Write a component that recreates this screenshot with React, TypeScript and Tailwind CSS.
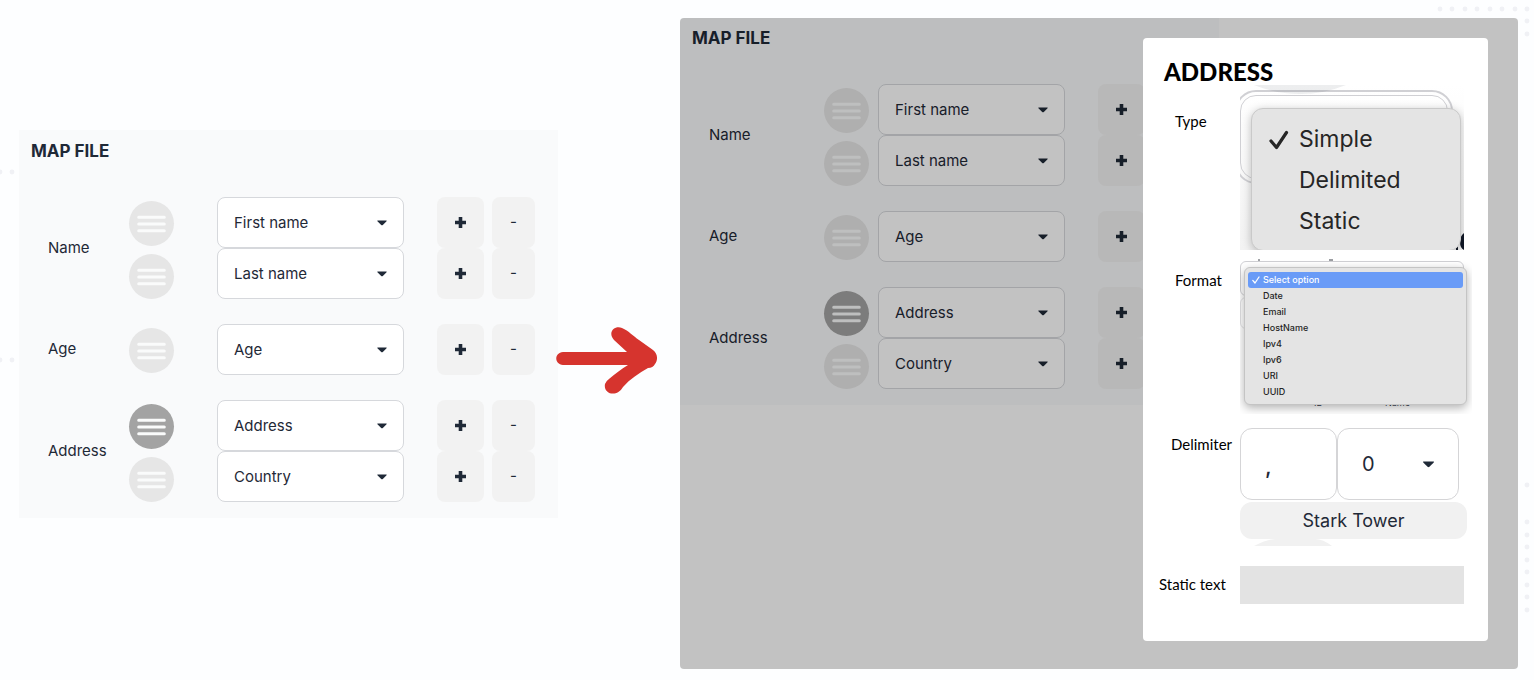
import { useState } from 'react';
import type { ReactNode } from 'react';

type Field = { name: string; active?: boolean };
type Group = { label: string; fields: Field[] };

const GROUPS: Group[] = [
  { label: 'Name', fields: [{ name: 'First name' }, { name: 'Last name' }] },
  { label: 'Age', fields: [{ name: 'Age' }] },
  { label: 'Address', fields: [{ name: 'Address', active: true }, { name: 'Country' }] },
];

const FIELD_NAMES = ['First name', 'Last name', 'Age', 'Address', 'Country'];
const TYPES = ['Simple', 'Delimited', 'Static'];
const FORMATS = ['Select option', 'Date', 'Email', 'HostName', 'Ipv4', 'Ipv6', 'URI', 'UUID'];

function Caret({ className }: { className: string }) {
  return (
    <svg viewBox="0 0 10 6" className={className} aria-hidden="true">
      <path d="M0.4 0.4H9.6Q9.8 1 9.3 1.5L5.8 4.9Q5 5.6 4.2 4.9L0.7 1.5Q0.2 1 0.4 0.4Z" fill="#1f2937" />
    </svg>
  );
}

function Check({ className }: { className: string }) {
  return (
    <svg viewBox="0 0 20 20" className={className} fill="none" aria-hidden="true">
      <path d="M2 11L7.5 17.5L17.5 2.5" stroke="currentColor" strokeWidth="3.2" strokeLinecap="round" strokeLinejoin="round" />
    </svg>
  );
}

function MenuButton({ field }: { field: Field }) {
  return (
    <button
      type="button"
      aria-label={`Options for ${field.name}`}
      className={`flex size-[45px] items-center justify-center rounded-full ${field.active ? 'bg-[#a3a3a3]' : 'bg-[#e6e6e6]'}`}
    >
      <svg viewBox="0 0 29 18" className="h-[18px] w-[29px]" aria-hidden="true">
        <path d="M1.7 2.2H27.3M1.7 9H27.3M1.7 15.8H27.3" stroke="#fafbfb" strokeWidth="3" strokeLinecap="round" />
      </svg>
    </button>
  );
}

function MapFile({ compact = false }: { compact?: boolean }) {
  return (
    <section className="w-[539px] shrink-0 bg-[#f9fafb] pr-[23px] pb-4 pl-[29px] text-[#1f2937]">
      <h2 className={`-ml-[17px] text-[17px] leading-6 font-bold ${compact ? 'h-[66px] pt-2' : 'h-[67px] pt-[9px]'}`}>MAP FILE</h2>
      <div className="flex flex-col gap-[25px]">
        {GROUPS.map((group) => (
          <div key={group.label} className="flex text-[15px]">
            <div className="flex flex-1 items-center">{group.label}</div>
            <div className={`flex flex-col gap-2 pt-1 ${compact ? 'mr-[9px]' : 'mr-[43px]'}`}>
              {group.fields.map((field) => (
                <MenuButton key={field.name} field={field} />
              ))}
            </div>
            <div className="flex flex-col">
              {group.fields.map((field) => (
                <div key={field.name} className="flex h-[51px]">
                  <div className="grid items-center">
                    <select
                      aria-label={`${group.label} column`}
                      defaultValue={field.name}
                      className="col-start-1 row-start-1 h-full w-[187px] appearance-none rounded-lg border border-[#d6d8dc] bg-white px-4 pt-px"
                    >
                      {FIELD_NAMES.map((name) => (
                        <option key={name}>{name}</option>
                      ))}
                    </select>
                    <Caret className="pointer-events-none col-start-1 row-start-1 mr-[17px] h-[6px] w-[10px] justify-self-end" />
                  </div>
                  <button
                    type="button"
                    aria-label={`Add after ${field.name}`}
                    className="ml-[33px] flex w-[47px] items-center justify-center rounded-lg bg-[#f2f2f2]"
                  >
                    <svg viewBox="0 0 11 11" className="size-[11px]" aria-hidden="true">
                      <path d="M5.5 0V11M0 5.5H11" stroke="#1f2937" strokeWidth="3.6" />
                    </svg>
                  </button>
                  <button type="button" aria-label={`Remove ${field.name}`} className="ml-2 w-[43px] rounded-lg bg-[#f2f2f2]">
                    -
                  </button>
                </div>
              ))}
            </div>
          </div>
        ))}
      </div>
    </section>
  );
}

function Row({ label, htmlFor, className, children }: { label: string; htmlFor: string; className: string; children: ReactNode }) {
  return (
    <div className="flex items-start">
      <label htmlFor={htmlFor} className={`w-[97px] shrink-0 text-[15px] leading-5 text-black ${className}`}>
        {label}
      </label>
      {children}
    </div>
  );
}

function TypeField() {
  const [value, setValue] = useState('Simple');
  return (
    <div className="relative h-[165px] w-[224px] overflow-hidden bg-linear-to-b from-white to-[#f3f3f3] font-[Inter,sans-serif]">
      <button
        id="type"
        type="button"
        aria-haspopup="listbox"
        aria-label="Type"
        className="absolute top-[10px] left-0 h-[84px] w-[208px] rounded-2xl border border-[#d0d0d4] bg-linear-to-b from-white to-[#f8f8f8] outline-2 outline-offset-3 outline-[#d0d0d4]"
      />
      <svg viewBox="0 0 224 165" className="pointer-events-none absolute inset-0 size-full" aria-hidden="true">
        <path d="M14 0H106Q84 9 60 9Q36 9 14 0Z" fill="#1f2937" fillOpacity="0.08" />
        <path d="M216 165V159H218V165ZM224 148Q220 151 220 157Q220 163 224 165Z" fill="#111827" />
      </svg>
      <div
        role="listbox"
        aria-label="Type"
        className="absolute top-[23px] left-[11px] flex w-[210px] flex-col rounded-xl border border-[#c9c9c9] bg-[#e4e4e4] pt-[10px] pb-2 shadow-[0_2px_10px_rgba(0,0,0,0.25)]"
      >
        {TYPES.map((type) => (
          <button
            key={type}
            type="button"
            role="option"
            aria-selected={type === value}
            onClick={() => setValue(type)}
            className="flex h-[41px] items-center gap-2 pl-[17px] text-[23px] text-[#262626]"
          >
            <span className="w-[22px]">{type === value && <Check className="size-5" />}</span>
            {type}
          </button>
        ))}
      </div>
    </div>
  );
}

function FormatField() {
  const [value, setValue] = useState('Select option');
  return (
    <div className="relative h-[156px] w-[232px] overflow-hidden font-[Inter,sans-serif]">
      <div className="absolute top-[3px] left-0 h-[35px] w-[224px] rounded-md border border-[#d0d0d4]" />
      <div className="absolute top-[39px] left-0 h-[32px] w-[224px] rounded-md border border-[#e2e2e4]" />
      <svg viewBox="0 0 232 4" className="absolute top-0 left-0 h-1 w-[232px]" aria-hidden="true">
        <path d="M19 1V3M89 2H93" stroke="#7c7f84" strokeWidth="1.4" />
      </svg>
      <div className="absolute bottom-[5px] left-[74px] flex gap-[62px] text-[9px] leading-3 text-[#374151]">
        <span>ID</span>
        <span>Name</span>
      </div>
      <div
        id="format"
        role="listbox"
        aria-label="Format"
        className="absolute top-[9px] left-1 flex w-[223px] flex-col rounded-md border border-[#c4c4c4] bg-[#e4e4e4] px-[3px] py-1 shadow-[0_3px_10px_rgba(0,0,0,0.3)]"
      >
        {FORMATS.map((format) => (
          <button
            key={format}
            type="button"
            role="option"
            aria-selected={format === value}
            onClick={() => setValue(format)}
            className={`flex h-4 items-center rounded-[3px] pl-1 text-[9px] font-medium ${format === value ? 'bg-[#699bf7] text-white' : 'text-[#262626]'}`}
          >
            <span className="w-[11px]">{format === value && <Check className="size-2" />}</span>
            {format}
          </button>
        ))}
      </div>
    </div>
  );
}

function DelimiterField() {
  return (
    <div className="w-[227px] font-[Inter,sans-serif] text-[#1f2937]">
      <div className="flex h-[72px]">
        <input
          id="delimiter"
          defaultValue=","
          className="w-[97px] rounded-xl border border-[#d5d5d7] bg-white px-6 pt-1 text-[22px] font-medium"
        />
        <div className="grid items-center">
          <select
            aria-label="Part"
            defaultValue="0"
            className="col-start-1 row-start-1 h-full w-[122px] appearance-none rounded-xl border border-[#d5d5d7] bg-white px-6 text-xl"
          >
            <option>0</option>
            <option>1</option>
          </select>
          <Caret className="pointer-events-none col-start-1 row-start-1 mr-6 h-[7px] w-[13px] justify-self-end" />
        </div>
      </div>
      <button type="button" className="mt-[2px] h-[37px] w-full rounded-xl bg-[#f1f1f1] pt-px text-lg">
        Stark Tower
      </button>
      <svg viewBox="0 0 227 7" className="block h-[7px] w-[227px]" aria-hidden="true">
        <path d="M14 7Q28 0 36 0H75Q83 0 92 7Z" fill="#f1f1f1" />
      </svg>
    </div>
  );
}

function AddressDialog() {
  return (
    <div
      role="dialog"
      aria-labelledby="dialog-title"
      className="col-start-1 row-start-1 mt-5 mr-[30px] mb-7 w-[345px] justify-self-end rounded bg-white pb-[37px] font-[Lato,sans-serif]"
    >
      <h2 id="dialog-title" className="h-[47px] pt-5 pl-[21px] text-2xl leading-7 font-black text-black">
        ADDRESS
      </h2>
      <Row label="Type" htmlFor="type" className="pt-[26px] pl-8">
        <TypeField />
      </Row>
      <div className="mt-2">
        <Row label="Format" htmlFor="format" className="pt-3 pl-8">
          <FormatField />
        </Row>
      </div>
      <div className="mt-[14px]">
        <Row label="Delimiter" htmlFor="delimiter" className="pt-[6px] pl-7">
          <DelimiterField />
        </Row>
      </div>
      <div className="mt-5">
        <Row label="Static text" htmlFor="static-text" className="pt-2 pl-4">
          <input id="static-text" className="h-[38px] w-[224px] bg-[#e3e3e3] px-3" />
        </Row>
      </div>
    </div>
  );
}

function Dots({ points, className }: { points: number[][]; className: string }) {
  return (
    <svg viewBox="0 0 100 620" className={className} aria-hidden="true">
      {points.map(([x, y]) => (
        <circle key={`${x}-${y}`} cx={x} cy={y} r="2.4" fill="#f0f1f5" />
      ))}
    </svg>
  );
}

const LEFT_DOTS = [[0, 172], [12, 172], [0, 360], [12, 360]];
const RIGHT_DOTS = [
  [6, 9], [18, 9], [31, 9], [43, 9], [56, 9], [68, 9], [81, 9], [93, 9], [93, 21], [93, 34],
  [93, 485], [93, 522], [93, 535], [93, 547], [93, 560], [93, 572], [93, 585], [93, 597], [93, 610],
];

export default function App() {
  return (
    <main className="relative flex min-h-screen items-start bg-[#fdfeff] pt-[18px] pr-4 pb-[11px] pl-[19px] font-[Inter,sans-serif]">
      <Dots points={LEFT_DOTS} className="pointer-events-none absolute top-0 left-0 h-[620px] w-[100px]" />
      <Dots points={RIGHT_DOTS} className="pointer-events-none absolute top-0 right-0 h-[620px] w-[100px]" />
      <div className="relative mt-28">
        <MapFile />
      </div>
      <svg viewBox="0 0 102 70" className="relative mt-[308px] mr-[22px] -ml-[2px] h-[70px] w-[102px] shrink-0" aria-hidden="true">
        <path
          d="M7 26H71L58 14C51 6 59 -1 66 2C73 5 77 10 83 14L97 24C102 28 102 34 99 38Q97 42 92 42C83 47 74 53 67 61C61 72 47 68 49 58Q50 55 53 53C59 48 65 43 72 39H7C-2 38 -2 27 7 26Z"
          fill="#d6342e"
        />
      </svg>
      <div className="relative grid min-w-0 flex-1 overflow-hidden rounded bg-white">
        <div className="col-start-1 row-start-1">
          <MapFile compact />
        </div>
        <div className="col-start-1 row-start-1 bg-black/24" />
        <AddressDialog />
      </div>
    </main>
  );
}
